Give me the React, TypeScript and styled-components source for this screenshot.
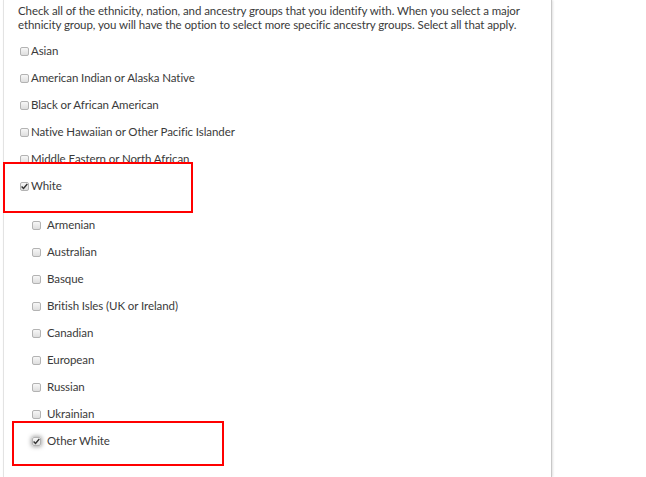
import React from "react";
import styled, { createGlobalStyle } from "styled-components";

const Global = createGlobalStyle`
  html, body { margin: 0; padding: 0; background: #fff; }
  body { font-family: Lato, "Noto Sans", sans-serif; color: #333; overflow: hidden; }
`;

const Page = styled.div`
  position: relative;
  width: 646px;
  height: 477px;
  overflow: hidden;
`;

const Panel = styled.div`
  margin-left: 3px;
  width: 549px;
  height: 477px;
  border-left: 1px solid #e3e3e3;
  border-right: 1px solid #c8c8c8;
  box-shadow: 1px 0 2px rgba(0, 0, 0, 0.12);
  padding: 4px 0 0 14px;
  box-sizing: border-box;
`;

const Intro = styled.p`
  margin: 0;
  font-size: 11.5px;
  letter-spacing: -0.08px;
  line-height: 14px;
  color: #3a3a3a;
`;

const List = styled.div`
  display: flex;
  flex-direction: column;
  margin-top: 5px;
`;

const Row = styled.label<{ $indent?: boolean }>`
  display: flex;
  align-items: center;
  height: 27px;
  padding-left: ${(p) => (p.$indent ? "14px" : "2px")};
  gap: ${(p) => (p.$indent ? "6px" : "2px")};
  font-size: 11.5px;
  letter-spacing: -0.08px;
  color: #3a3a3a;
`;

const SubList = styled.div`
  display: flex;
  flex-direction: column;
  margin-top: 12px;
`;

const Box = styled.span<{ $focus?: boolean }>`
  width: 7px;
  height: 7px;
  border: 1px solid #b3b3b3;
  border-radius: 2px;
  background: linear-gradient(#f7f7f7, #dedede);
  display: inline-flex;
  align-items: center;
  justify-content: center;
  flex: none;
  margin-top: 1px;
  box-shadow: ${(p) => (p.$focus ? "0 0 4px 1px rgba(0,0,0,0.35)" : "none")};
`;

const Mark = styled.div<{ $x: number; $y: number; $w: number; $h: number }>`
  position: absolute;
  left: ${(p) => p.$x}px;
  top: ${(p) => p.$y}px;
  width: ${(p) => p.$w}px;
  height: ${(p) => p.$h}px;
  border: 2px solid #ff0000;
  box-sizing: border-box;
  pointer-events: none;
`;

const Check = () => (
  <svg width="7" height="7" viewBox="0 0 7 7">
    <path d="M0.6 3.6 L2.5 5.5 L6.3 1.0" fill="none" stroke="#333" strokeWidth="1.4" />
  </svg>
);

const Item = ({ label, checked, indent, focus }: { label: string; checked?: boolean; indent?: boolean; focus?: boolean }) => (
  <Row $indent={indent}>
    <Box $focus={focus}>{checked && <Check />}</Box>
    <span>{label}</span>
  </Row>
);

const main = [
  "Asian",
  "American Indian or Alaska Native",
  "Black or African American",
  "Native Hawaiian or Other Pacific Islander",
  "Middle Eastern or North African",
];

const subs = ["Armenian", "Australian", "Basque", "British Isles (UK or Ireland)", "Canadian", "European", "Russian", "Ukrainian"];

export default function App() {
  return (
    <>
      <Global />
      <Page>
        <Panel>
          <Intro>
            Check all of the ethnicity, nation, and ancestry groups that you identify with. When you select a major
            ethnicity group, you will have the option to select more specific ancestry groups. Select all that apply.
          </Intro>
          <List>
            {main.map((m) => (
              <Item key={m} label={m} />
            ))}
            <Item label="White" checked />
            <SubList>
              {subs.map((s) => (
                <Item key={s} label={s} indent />
              ))}
              <Item label="Other White" indent checked focus />
            </SubList>
          </List>
        </Panel>
        <Mark $x={3} $y={162} $w={190} $h={51} />
        <Mark $x={12} $y={421} $w={212} $h={45} />
      </Page>
    </>
  );
}
